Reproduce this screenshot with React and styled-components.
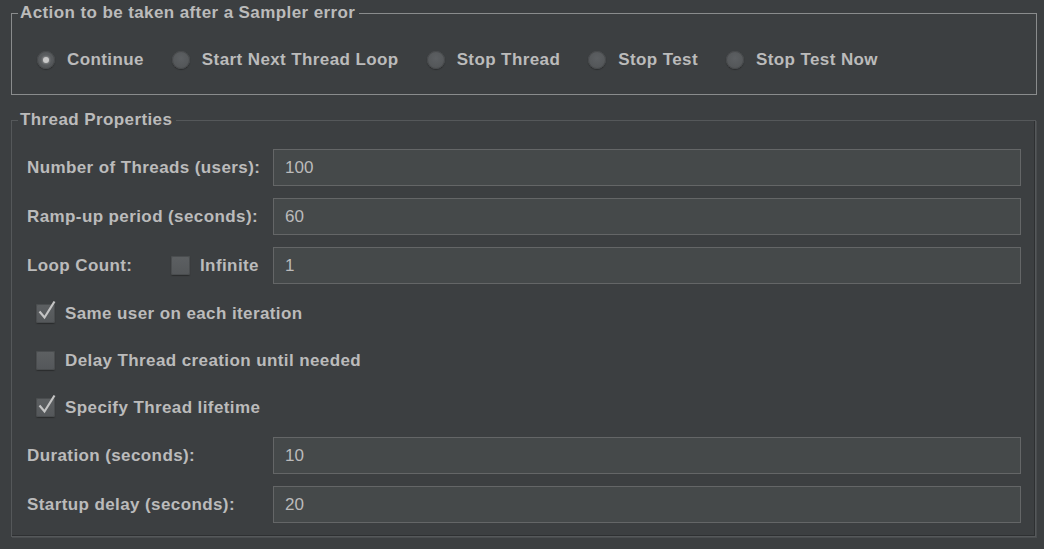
import React from 'react';
import styled, { createGlobalStyle } from 'styled-components';

const GlobalStyle = createGlobalStyle`
  body {
    margin: 0;
    background: #3c3f41;
    font-family: "Liberation Sans", Arial, sans-serif;
    color: #bbbbbb;
  }
`
const Page = styled.div`
  width: 1044px;
  height: 549px;
  padding: 3px 7px 0 11px;
  box-sizing: border-box;
  background: #3c3f41;
`
const Group = styled.fieldset`
  margin: 0;
  padding: 0;
  min-width: 0;
  border: 1px solid ${p => (p.$etched ? '#55585a' : '#8a8c8d')};
  box-shadow: ${p => (p.$etched ? 'inset -1px -1px 0 #2e3032, 1px 1px 0 #4a4d4f' : 'none')};
  width: ${p => p.$width || 'auto'};
  box-sizing: border-box;
  & + & {
    margin-top: 15px;
  }
`
const Legend = styled.legend`
  margin-left: 6px;
  padding: 0 4px 0 2px;
  font-size: 17px;
  line-height: 20px;
  font-weight: bold;
  letter-spacing: 0.4px;
  color: #bbbbbb;
`
const Inner = styled.div`
  padding: ${p => p.$pad};
`
const RadioRow = styled.div`
  display: flex;
  align-items: center;
  height: 20px;
  gap: 28px;
`
const Option = styled.label`
  display: flex;
  align-items: center;
  gap: 12px;
  font-size: 17px;
  font-weight: bold;
  letter-spacing: 0.4px;
  color: #bbbbbb;
`
const RadioDot = styled.span`
  width: 18px;
  height: 18px;
  border-radius: 50%;
  box-sizing: border-box;
  background: radial-gradient(circle at 50% 40%, #5d6063, #4f5254);
  box-shadow: 0 1px 1px #2b2d2e, inset 0 0 0 1px #47494b;
  display: flex;
  align-items: center;
  justify-content: center;
  &::after {
    content: '';
    display: ${p => (p.$checked ? 'block' : 'none')};
    width: 6px;
    height: 6px;
    border-radius: 50%;
    background: #c8c8c8;
    box-shadow: 0 0 2px 1px rgba(200, 200, 200, 0.35);
  }
`
const Form = styled.div`
  display: flex;
  flex-direction: column;
  gap: 12px;
`
const FieldRow = styled.div`
  display: grid;
  grid-template-columns: 246px 1fr;
  align-items: center;
  height: 37px;
`
const Label = styled.span`
  font-size: 17px;
  font-weight: bold;
  letter-spacing: 0.4px;
  color: #bbbbbb;
  white-space: nowrap;
`
const LoopLabel = styled.div`
  display: flex;
  align-items: center;
`
const LoopText = styled(Label)`
  width: 144px;
`
const Input = styled.div`
  height: 37px;
  box-sizing: border-box;
  background: #45494a;
  border: 1px solid #646667;
  padding-left: 11px;
  display: flex;
  align-items: center;
  font-size: 17px;
  color: #bbbbbb;
`
const CheckRow = styled.label`
  display: flex;
  align-items: center;
  gap: 10px;
  height: 35px;
  padding-left: ${p => p.$indent || 0}px;
  font-size: 17px;
  font-weight: bold;
  letter-spacing: 0.4px;
  color: #bbbbbb;
  white-space: nowrap;
`
const Box = styled.span`
  position: relative;
  width: 19px;
  height: 19px;
  border-radius: 2px;
  box-sizing: border-box;
  background: linear-gradient(#5d6062, #54575a);
  box-shadow: 0 1px 1px #2a2c2d, inset 0 0 0 1px #4a4d4f;
  flex: none;
  svg {
    position: absolute;
    left: 1px;
    top: -5px;
  }
`

function Radio({ label, checked }) {
  return (
    <Option>
      <RadioDot $checked={checked} />
      {label}
    </Option>
  )
}

function Check({ checked }) {
  return (
    <Box>
      {checked && (
        <svg width="20" height="22" viewBox="0 0 20 22">
          <path d="M2.5 12.5 L7.5 18.5 L17.5 2.5" fill="none" stroke="#c4c4c4" strokeWidth="2.2" />
        </svg>
      )}
    </Box>
  )
}

const actions = [
  { label: 'Continue', checked: true },
  { label: 'Start Next Thread Loop' },
  { label: 'Stop Thread' },
  { label: 'Stop Test' },
  { label: 'Stop Test Now' },
];

export default function App() {
  return (
    <Page>
      <GlobalStyle />
      <Group>
        <Legend>Action to be taken after a Sampler error</Legend>
        <Inner $pad="27px 0 24px 25px">
          <RadioRow>
            {actions.map(a => (
              <Radio key={a.label} label={a.label} checked={a.checked} />
            ))}
          </RadioRow>
        </Inner>
      </Group>
      <Group $etched $width="1025px">
        <Legend>Thread Properties</Legend>
        <Inner $pad="19px 14px 13px 15px">
          <Form>
            <FieldRow>
              <Label>Number of Threads (users):</Label>
              <Input>100</Input>
            </FieldRow>
            <FieldRow>
              <Label>Ramp-up period (seconds):</Label>
              <Input>60</Input>
            </FieldRow>
            <FieldRow>
              <LoopLabel>
                <LoopText>Loop Count:</LoopText>
                <CheckRow>
                  <Check />
                  Infinite
                </CheckRow>
              </LoopLabel>
              <Input>1</Input>
            </FieldRow>
            <CheckRow $indent={9}>
              <Check checked />
              Same user on each iteration
            </CheckRow>
            <CheckRow $indent={9}>
              <Check />
              Delay Thread creation until needed
            </CheckRow>
            <CheckRow $indent={9}>
              <Check checked />
              Specify Thread lifetime
            </CheckRow>
            <FieldRow>
              <Label>Duration (seconds):</Label>
              <Input>10</Input>
            </FieldRow>
            <FieldRow>
              <Label>Startup delay (seconds):</Label>
              <Input>20</Input>
            </FieldRow>
          </Form>
        </Inner>
      </Group>
    </Page>
  )
}
